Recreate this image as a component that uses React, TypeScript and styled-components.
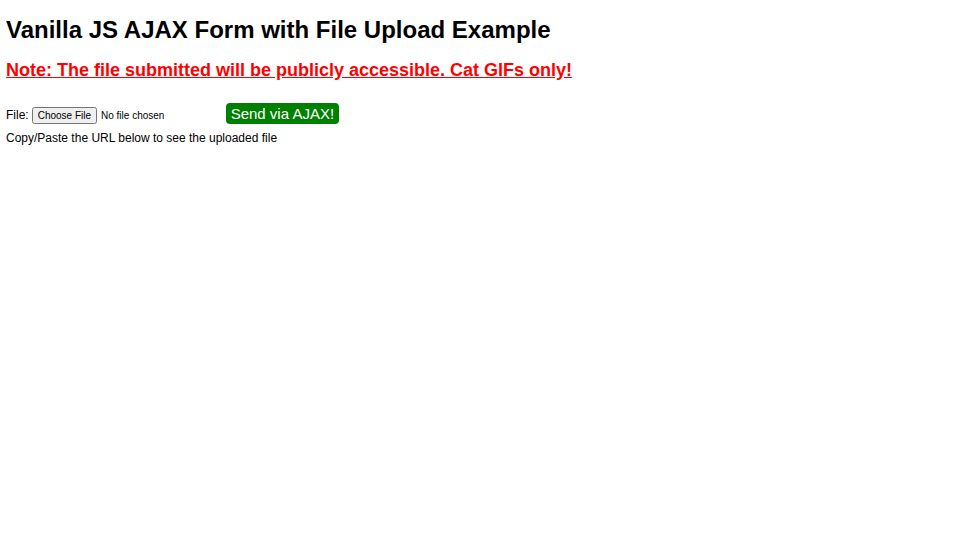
import styled, { createGlobalStyle } from "styled-components";

const GlobalStyle = createGlobalStyle`
  body {
    margin: 6px;
    background: #ffffff;
    font-family: "Liberation Sans", Arial, sans-serif;
    font-size: 12px;
    color: #000000;
  }
`;

const Title = styled.h1`
  font-size: 24px;
  font-weight: bold;
  margin: 10px 0 16px;
`;

const Note = styled.h2`
  font-size: 18px;
  font-weight: bold;
  margin: 15px 0;
  color: #ff0000;
  text-decoration: underline;
`;

const Form = styled.form`
  display: flex;
  align-items: center;
  margin-top: 25px;
`;

const Label = styled.label`
  font-size: 12px;
  margin-right: 3px;
`;

const FileInput = styled.input`
  font-family: "Liberation Sans", Arial, sans-serif;
  font-size: 10px;
  width: 191px;

  &::file-selector-button {
    font-family: inherit;
    font-size: 10px;
    padding: 1px 4px;
    margin-right: 4px;
  }
`;

const SendButton = styled.button`
  font-family: "Liberation Sans", Arial, sans-serif;
  font-size: 15px;
  color: #ffffff;
  background: #008000;
  border: none;
  border-radius: 4px;
  padding: 2px 5px;
  height: 21px;
  margin-left: 3px;
  line-height: 17px;
  margin-top: -3px;
`;

const Hint = styled.div`
  font-size: 12px;
  margin-top: 7px;
`;

export default function App() {
  return (
    <>
      <GlobalStyle />
      <Title>Vanilla JS AJAX Form with File Upload Example</Title>
      <Note>Note: The file submitted will be publicly accessible. Cat GIFs only!</Note>
      <Form onSubmit={(e) => e.preventDefault()}>
        <Label>File:</Label>
        <FileInput type="file" />
        <SendButton type="submit">Send via AJAX!</SendButton>
      </Form>
      <Hint>Copy/Paste the URL below to see the uploaded file</Hint>
    </>
  );
}
